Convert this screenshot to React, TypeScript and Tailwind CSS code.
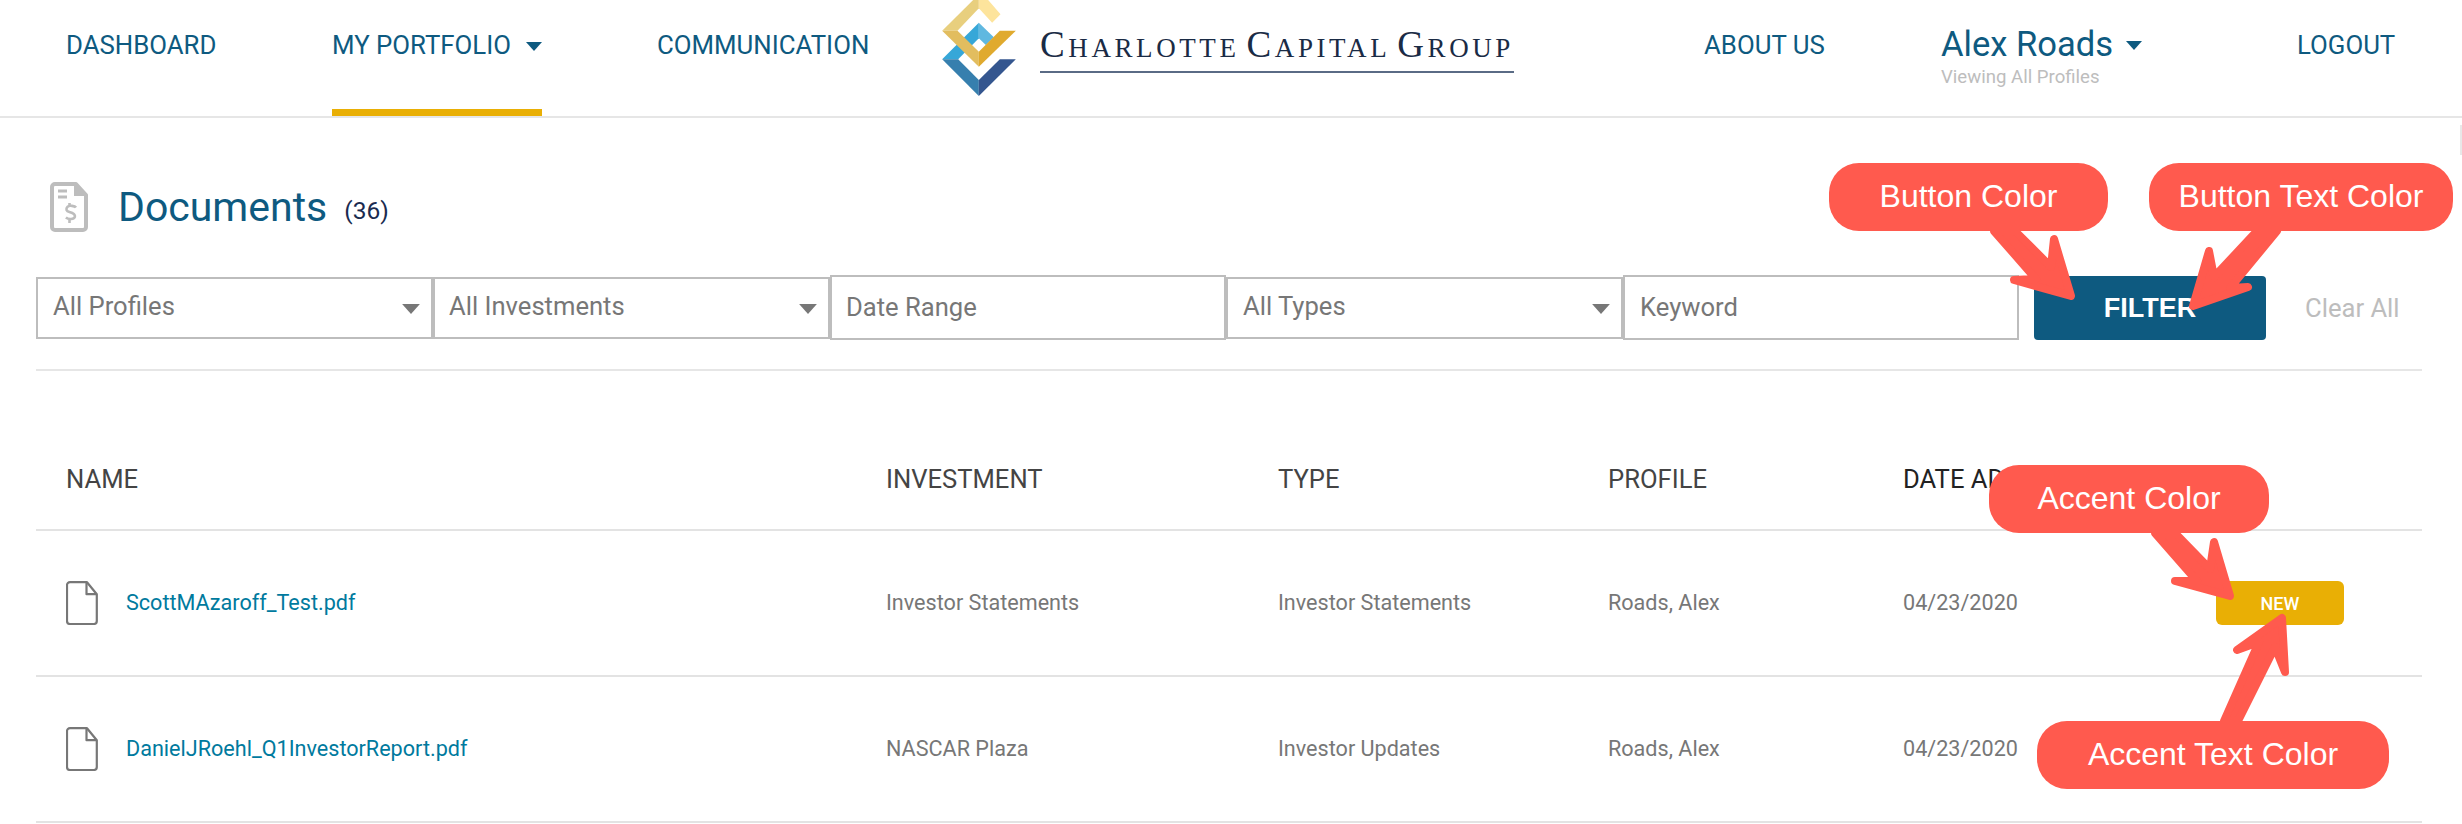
import React from 'react';

const Caret: React.FC<{ className: string; color: string }> = ({ className, color }) => (
  <svg className={className} viewBox="0 0 16 9">
    <polygon points="0,0 16,0 8,9" fill={color} />
  </svg>
);

const FileIcon = () => (
  <svg className="w-8 h-[44px] shrink-0" viewBox="0 0 32 44" fill="none" stroke="#777777" strokeWidth="2.2" strokeLinejoin="round">
    <path d="M4 1.2h17l9.8 12V40a3 3 0 0 1-3 3H4a3 3 0 0 1-3-3V4.2a3 3 0 0 1 3-3z" />
    <path d="M20.5 1.2v12h10.3" />
  </svg>
);

const DocIcon = () => (
  <svg className="w-[38px] h-[50px] shrink-0" viewBox="0 0 38 50" fill="none" stroke="#bdbdbd" strokeWidth="4">
    <path d="M5 2h21l10 11v32a3 3 0 0 1-3 3H5a3 3 0 0 1-3-3V5a3 3 0 0 1 3-3z" strokeLinejoin="round" />
    <path d="M25 3v10h10" fill="#bdbdbd" strokeWidth="2" />
    <path d="M8 9h9M8 15h9" strokeWidth="3" />
    <path d="M26 25.5c-1-1.6-7-2.6-8.600-.6-2 2.200-1 4.400 2 5.200 3 .8 6 2 5.500 4.600-.6 2.800-6.500 3-9 .8M19.500 21v3M19.500 37v4" strokeWidth="2.600" />
  </svg>
);

const Logo = () => (
  <svg className="w-[74px] h-24 shrink-0" viewBox="67 0 221 288">
    <polygon points="177,68 177,115 115,178 67,178" fill="#36a7d8" />
    <polygon points="177,68 222,112 198,135 177,115" fill="#60b8e0" />
    <polygon points="67,178 115,178 177,240 177,288" fill="#367fae" />
    <polygon points="177,240 240,178 288,178 177,288" fill="#34568f" />
    <polygon points="160,0 177,0 177,25 113,92 67,92" fill="#e8cf7e" />
    <polygon points="177,0 205,0 242,43 217,68 177,25" fill="#fde49c" />
    <polygon points="67,92 113,92 177,155 177,200" fill="#e2bd5f" />
    <polygon points="177,155 240,92 288,92 177,200" fill="#e0aa2e" />
  </svg>
);

const SmallCaps: React.FC<{ first: string; rest: string }> = ({ first, rest }) => (
  <span>
    <span className="text-[37px]">{first}</span>
    <span className="text-[27px]">{rest}</span>
  </span>
);

const Callout: React.FC<{ className: string; label: string }> = ({ className, label }) => (
  <div className={`absolute h-[68px] pb-[2px] rounded-[30px] bg-[#ff5a4e] flex items-center justify-center text-white text-[32px] font-['Liberation_Sans',sans-serif] ${className}`}>
    {label}
  </div>
);

const selectBox = 'relative h-[62px] w-[397px] shrink-0 border-2 border-[#bdbdbd] pb-[4px] text-[25.6px] text-[#777777] flex items-center';
const inputBox = 'h-[65px] -mt-[2px] shrink-0 border-2 border-[#bdbdbd] text-[25.6px] text-[#777777] flex items-center';
const tableGrid = 'grid grid-cols-[820px_392px_330px_295px_1fr] pl-[30px] border-b-2 border-[#e3e3e3] items-center';

const rows = [
  { name: 'ScottMAzaroff_Test.pdf', investment: 'Investor Statements', type: 'Investor Statements', isNew: true },
  { name: 'DanielJRoehl_Q1InvestorReport.pdf', investment: 'NASCAR Plaza', type: 'Investor Updates', isNew: false },
];

export default function App() {
  return (
    <div className="relative w-full h-[824px] overflow-hidden bg-white font-['Roboto',sans-serif]">
      {/* top nav */}
      <header className="flex h-[118px] pl-[66px] border-b-2 border-[#e6e6e6] text-[25.8px] leading-[38px] text-[#0e5a80]">
        <div className="w-[266px] pt-[26px]">DASHBOARD</div>
        <div className="w-[325px]">
          <div className="w-[210px] h-[116px] pt-[26px] border-b-[7px] border-[#e9af05] flex justify-between">
            <span className="whitespace-nowrap">MY PORTFOLIO</span>
            <Caret className="w-4 h-[9px] mt-[16px]" color="#0e5a80" />
          </div>
        </div>
        <div className="w-[285px] pt-[26px]">COMMUNICATION</div>
        <div className="w-[762px] flex">
          <Logo />
          <div className="ml-6 w-[474px] h-[73px] border-b-2 border-[#5a6b85] pt-[23px] font-['Liberation_Serif',serif] text-[#1a2b45] flex justify-between leading-[44px] tracking-[3.6px] whitespace-nowrap">
            <SmallCaps first="C" rest="HARLOTTE" />
            <SmallCaps first="C" rest="APITAL" />
            <SmallCaps first="G" rest="ROUP" />
          </div>
        </div>
        <div className="w-[237px] pt-[26px]">ABOUT US</div>
        <div className="w-[356px] pt-[22px]">
          <div className="flex items-center text-[34.6px] leading-[44px]">
            Alex Roads
            <Caret className="w-4 h-[9px] ml-[13px] mt-[2px]" color="#0e5a80" />
          </div>
          <div className="text-[18.6px] leading-[22px] text-[#bdbdbd]">Viewing All Profiles</div>
        </div>
        <div className="pt-[26px]">LOGOUT</div>
      </header>

      <main className="pl-[36px] w-[2422px]">
        <div className="h-[158px] flex items-start pl-[14px] pt-[64px]">
          <DocIcon />
          <h1 className="ml-[30px] text-[41px] leading-[50px] text-[#0e5a80]">Documents</h1>
          <span className="ml-[17px] mt-[11px] text-[24.5px] leading-[36px] text-[#1a2b50]">(36)</span>
        </div>

        {/* filters */}
        <div className="flex items-center h-[64px]">
          <div className={`${selectBox} pl-[15px]`}>
            All Profiles
            <Caret className="absolute right-[11px] top-[25px] w-[18px] h-[10px]" color="#777777" />
          </div>
          <div className={`${selectBox} pl-[14px]`}>
            All Investments
            <Caret className="absolute right-[11px] top-[25px] w-[18px] h-[10px]" color="#777777" />
          </div>
          <div className={`${inputBox} w-[396px] pl-[14px]`}>Date Range</div>
          <div className={`${selectBox} pl-[15px]`}>
            All Types
            <Caret className="absolute right-[11px] top-[25px] w-[18px] h-[10px]" color="#777777" />
          </div>
          <div className={`${inputBox} w-[396px] pl-[15px]`}>Keyword</div>
          <button className="ml-[15px] w-[232px] h-[64px] shrink-0 rounded-[4px] bg-[#0e5a80] text-white font-bold text-[27px] font-['Liberation_Sans',sans-serif]">
            FILTER
          </button>
          <span className="ml-[39px] text-[25.6px] text-[#bdbdbd] whitespace-nowrap">Clear All</span>
        </div>

        <div className="mt-[29px] h-0.5 bg-[#e6e6e6]" />

        {/* table */}
        <div className={`${tableGrid} h-[160px] pt-[59px] text-[25.6px] text-[#444444]`}>
          <div>NAME</div>
          <div>INVESTMENT</div>
          <div>TYPE</div>
          <div>PROFILE</div>
          <div className="text-[#222222] whitespace-nowrap">DATE ADDED</div>
        </div>
        {rows.map((row) => (
          <div key={row.name} className={`${tableGrid} h-[146px] text-[21.6px] text-[#777777]`}>
            <div className="flex items-center">
              <FileIcon />
              <span className="ml-[28px] text-[#007a9e]">{row.name}</span>
            </div>
            <div>{row.investment}</div>
            <div>{row.type}</div>
            <div>Roads, Alex</div>
            <div className="flex items-center">
              <span className="w-[313px] shrink-0">04/23/2020</span>
              {row.isNew && (
                <span className="w-[128px] h-[44px] shrink-0 rounded-[6px] bg-[#e9af05] text-white text-[18px] font-medium flex items-center justify-center">
                  NEW
                </span>
              )}
            </div>
          </div>
        ))}
      </main>

      {/* sliver of a scrollbar at the right edge */}
      <div className="absolute right-0 top-[125px] w-[2px] h-[30px] bg-[#e8e8e8]" />

      {/* annotations drawn on top of the screenshot */}
      <svg className="absolute inset-0 w-[2462px] h-[824px] pointer-events-none" viewBox="0 0 2462 824" fill="#ff5a4e" stroke="#ff5a4e" strokeWidth="8" strokeLinejoin="round">
        <polygon points="1994,231 2036,279 2014,280 2071,296 2054,239 2051,267 2015,231" />
        <polygon points="2257,231 2214,277 2209,251 2193,306 2248,287 2230,288 2277,231" />
        <polygon points="2155,533 2197,581 2175,581 2230,596 2214,542 2210,569 2175,533" />
        <polygon points="2224,721 2259,642 2237,650 2282,618 2285,672 2275,647 2238,721" />
      </svg>
      <Callout className="left-[1829px] top-[163px] w-[279px]" label="Button Color" />
      <Callout className="left-[2149px] top-[163px] w-[304px]" label="Button Text Color" />
      <Callout className="left-[1989px] top-[465px] w-[280px]" label="Accent Color" />
      <Callout className="left-[2037px] top-[721px] w-[352px]" label="Accent Text Color" />
    </div>
  );
}
